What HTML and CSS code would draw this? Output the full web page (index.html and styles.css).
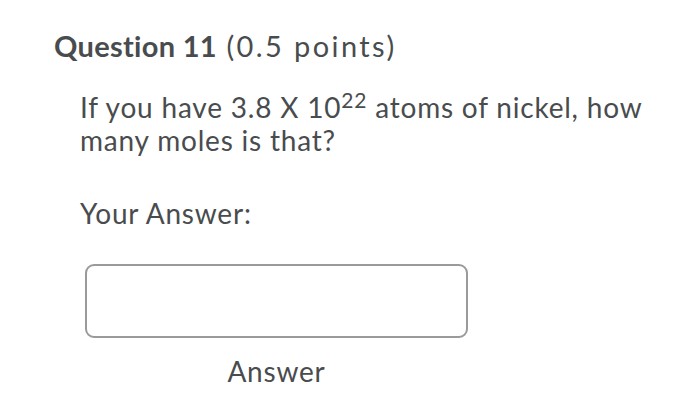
FILE: index.html
```html
<!DOCTYPE html>
<html lang="en">
<head>
    <meta charset="UTF-8">
    <title>Question 11</title>
    <link rel="stylesheet" href="styles.css">
</head>
<body>
    <div class="question">
        <h2 class="question-title"><strong>Question 11</strong> <span class="points">(0.5 points)</span></h2>
        <p class="question-text">If you have 3.8 X 10<sup>22</sup> atoms of nickel, how many moles is that?</p>
        <p class="answer-label">Your Answer:</p>
        <div class="answer-field">
            <input type="text" class="answer-input" aria-label="Answer">
            <div class="answer-caption">Answer</div>
        </div>
    </div>
</body>
</html>
```

FILE: styles.css
```css
body {
    margin: 0;
    padding: 0;
    background: #fff;
    color: #494c4e;
    font-family: Lato, "Open Sans", sans-serif;
}
.question {
    padding: 26px 0 0 54px;
}
.question-title {
    margin: 0;
    font-size: 29px;
    font-weight: normal;
    line-height: 40px;
}
.question-title strong {
    font-weight: bold;
    letter-spacing: 0.3px;
}
.points {
    margin-left: 2px;
    letter-spacing: 2.4px;
}
.question-text {
    width: 570px;
    margin: 25px 0 0 26px;
    font-size: 28px;
    line-height: 33px;
    letter-spacing: 0.8px;
}
.question-text sup {
    font-size: 21px;
    line-height: 0;
    vertical-align: 10px;
}
.answer-label {
    margin: 40px 0 0 26px;
    font-size: 28px;
    line-height: 33px;
    letter-spacing: 0.8px;
}
.answer-field {
    width: 383px;
    margin: 34px 0 0 31px;
}
.answer-input {
    box-sizing: border-box;
    display: block;
    width: 383px;
    height: 74px;
    border: 2px solid #9a9a9a;
    border-radius: 9px;
    background: #fff;
}
.answer-caption {
    margin-top: 17px;
    text-align: center;
    font-size: 28px;
    line-height: 33px;
    letter-spacing: 0.8px;
}
```
